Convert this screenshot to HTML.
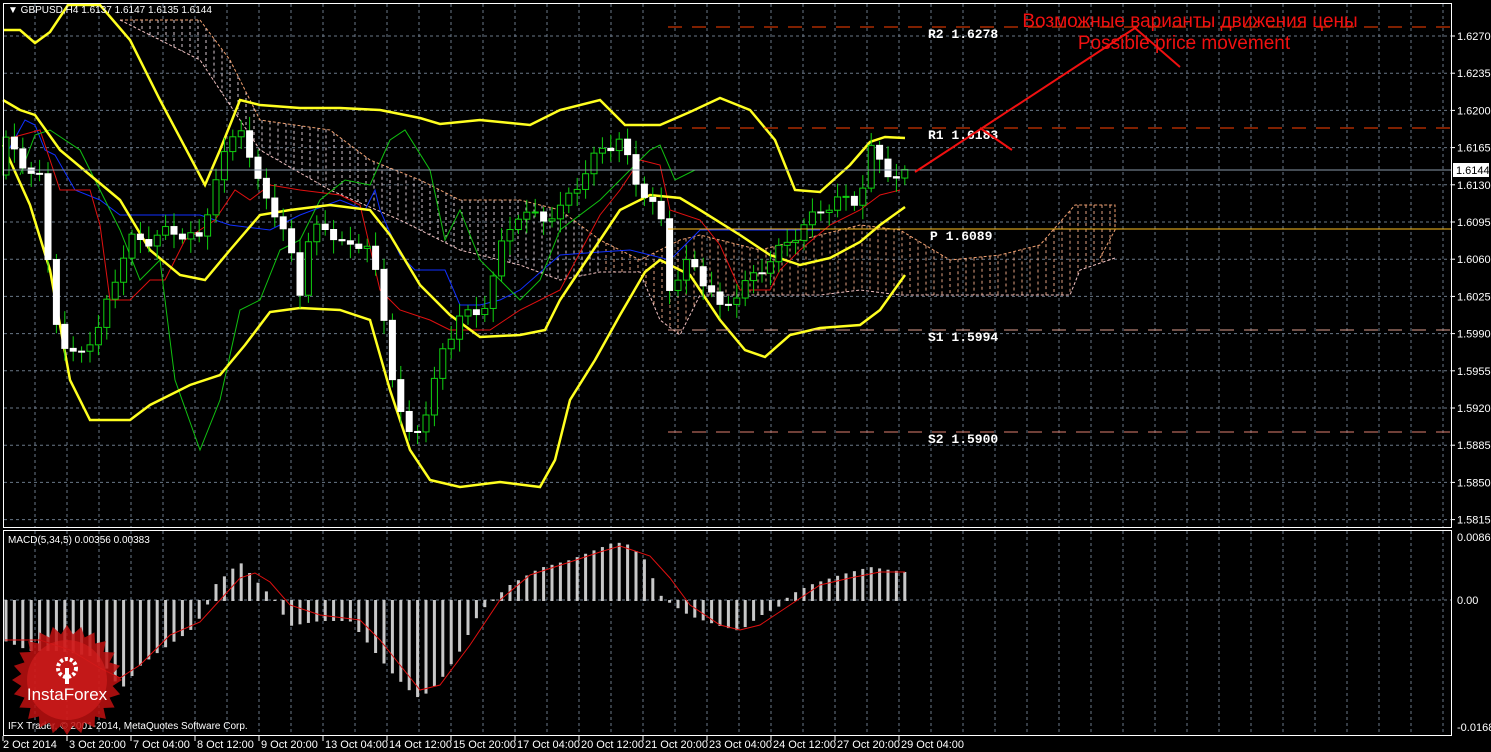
<!DOCTYPE html>
<html><head><meta charset="utf-8"><style>
html,body{margin:0;padding:0;background:#000;width:1491px;height:752px;overflow:hidden}
svg{display:block}
text{font-family:"Liberation Sans",sans-serif}
.ax{fill:#fff;font-size:11px}
.lv{fill:#fff;font-family:"Liberation Mono",monospace;font-size:13px;font-weight:bold}
</style></head><body>
<svg id="s" width="1491" height="752" xmlns="http://www.w3.org/2000/svg">
<rect width="1491" height="752" fill="#000"/>
<g id="grid"></g>
<g id="cloud"></g>
<g id="lines"></g>
<g id="cand"></g>
<g id="macd"></g>
<line x1="668" y1="27" x2="1451" y2="27" stroke="#ff4000" stroke-width="1" stroke-dasharray="14,10"/>
<line x1="668" y1="128" x2="1451" y2="128" stroke="#ff4000" stroke-width="1" stroke-dasharray="14,10"/>
<line x1="668" y1="229" x2="1451" y2="229" stroke="#ffc020" stroke-width="1"/>
<line x1="668" y1="330" x2="1451" y2="330" stroke="#e0a090" stroke-width="1" stroke-dasharray="14,10"/>
<line x1="668" y1="432" x2="1451" y2="432" stroke="#e08070" stroke-width="1" stroke-dasharray="14,10"/>
<line x1="3" y1="170" x2="1451" y2="170" stroke="#8898a8" stroke-width="1"/>
<text class="lv" x="928" y="38">R2 1.6278</text>
<text class="lv" x="928" y="139">R1 1.6183</text>
<text class="lv" x="930" y="240">P 1.6089</text>
<text class="lv" x="928" y="341">S1 1.5994</text>
<text class="lv" x="928" y="443">S2 1.5900</text>
<polyline points="915,172 1135,28 1180,67" fill="none" stroke="#f01010" stroke-width="2"/>
<line x1="980" y1="128" x2="1012" y2="150" stroke="#f01010" stroke-width="2"/>
<text x="1190" y="27" fill="#f01010" font-size="19" text-anchor="middle">Возможные варианты движения цены</text>
<text x="1184" y="49" fill="#f01010" font-size="19" text-anchor="middle">Possible price movement</text>
<rect x="3.5" y="3.5" width="1448" height="524" fill="none" stroke="#fff"/>
<rect x="3.5" y="530.5" width="1448" height="205" fill="none" stroke="#fff"/>
<g id="axis"></g>
<text x="8" y="13" fill="#fff" font-size="10">▼ GBPUSD,H4  1.6137 1.6147 1.6135 1.6144</text>
<text x="8" y="543" fill="#fff" font-size="10">MACD(5,34,5) 0.00356 0.00383</text>
<text x="8" y="729" fill="#fff" font-size="10">IFX Trader, © 2001-2014, MetaQuotes Software Corp.</text>
<rect x="1453" y="163" width="36" height="14" fill="#fff"/>
<text x="1456" y="174" fill="#000" font-size="11">1.6144</text>
<g transform="translate(67,680)">
<polygon id="star" fill="#c01010" opacity="0.85"/>
<circle r="40" fill="#d82020" opacity="0.6"/>
<circle cx="0" cy="-12" r="9" fill="none" stroke="#fff" stroke-width="4" stroke-dasharray="3,2"/>
<rect x="-2" y="-12" width="4" height="16" fill="#fff"/>
<text x="0" y="20" fill="#fff" font-size="17" text-anchor="middle">InstaForex</text>
</g>
</svg>
<script>
const NS="http://www.w3.org/2000/svg";
function el(p,t,a){const e=document.createElementNS(NS,t);for(const k in a)e.setAttribute(k,a[k]);document.getElementById(p).appendChild(e);return e;}
function interp(pts,x){for(let i=0;i<pts.length-1;i++){if(x>=pts[i][0]&&x<=pts[i+1][0]){const t=(x-pts[i][0])/(pts[i+1][0]-pts[i][0]);return pts[i][1]+t*(pts[i+1][1]-pts[i][1]);}}return pts[pts.length-1][1];}
function pl(p,pts,c,w,d){const e=el(p,'polyline',{points:pts.map(a=>a.join(',')).join(' '),fill:'none',stroke:c,'stroke-width':w});if(d)e.setAttribute('stroke-dasharray',d);}
for(let x=35;x<1451;x+=32)el('grid','line',{x1:x,y1:4,x2:x,y2:527,stroke:'#6a7888','stroke-dasharray':'3,3'});
for(let x=35;x<1451;x+=32)el('grid','line',{x1:x,y1:531,x2:x,y2:735,stroke:'#6a7888','stroke-dasharray':'3,3'});
const prices=["1.6270","1.6235","1.6200","1.6165","1.6130","1.6095","1.6060","1.6025","1.5990","1.5955","1.5920","1.5885","1.5850","1.5815"];
prices.forEach((p,i)=>{const y=36+i*37.2;el('grid','line',{x1:4,y1:y,x2:1451,y2:y,stroke:'#6a7888','stroke-dasharray':'3,3'});el('axis','line',{x1:1451,y1:y,x2:1455,y2:y,stroke:'#fff'});const t=el('axis','text',{x:1457,y:y+4,class:'ax'});t.textContent=p;});
el('grid','line',{x1:4,y1:600,x2:1451,y2:600,stroke:'#6a7888','stroke-dasharray':'3,3'});
[["0.00869",537],["0.00",600],["-0.01682",727]].forEach(a=>{const t=el('axis','text',{x:1457,y:a[1]+4,class:'ax'});t.textContent=a[0];});
const dates=["2 Oct 2014","3 Oct 20:00","7 Oct 04:00","8 Oct 12:00","9 Oct 20:00","13 Oct 04:00","14 Oct 12:00","15 Oct 20:00","17 Oct 04:00","20 Oct 12:00","21 Oct 20:00","23 Oct 04:00","24 Oct 12:00","27 Oct 20:00","29 Oct 04:00"];
dates.forEach((d,i)=>{const x=3+i*64;el('axis','line',{x1:x,y1:736,x2:x,y2:741,stroke:'#fff'});const t=el('axis','text',{x:i?x+2:3,y:748,class:'ax'});t.setAttribute('font-size','10.5');t.textContent=d;});
const ctop=[[120,20],[200,20],[230,60],[260,120],[330,130],[370,160],[420,180],[460,200],[520,200],[560,210],[600,240],[640,260],[660,250],[680,240],[700,235],[720,240],[760,250],[800,240],[860,225],[900,230],[950,260],[1000,255],[1040,245],[1075,205],[1115,205],[1115,230],[1100,258]];
const cbot=[[120,20],[200,60],[260,150],[330,190],[400,220],[460,250],[520,265],[560,280],[600,272],[640,272],[660,320],[680,335],[700,295],[760,295],[820,295],[860,290],[900,295],[1000,295],[1070,295],[1080,270],[1115,258]];
for(let x=126;x<1115;x+=8){const a=interp(ctop,x),b=interp(cbot,x);if(b-a>4)el('cloud','line',{x1:x,y1:a,x2:x,y2:b,stroke:x<600?'#d8c8d0':'#e0a080','stroke-dasharray':'3,3','stroke-width':1});}
pl('cloud',ctop,'#f0a070',1,'3,2');pl('cloud',cbot,'#f0c0c0',1,'3,2');
pl('lines',[[3,160],[25,120],[35,125],[45,150],[55,155],[75,190],[100,200],[120,215],[160,215],[200,215],[230,225],[270,230],[300,215],[340,200],[365,210],[375,190],[380,210],[400,255],[415,270],[445,270],[460,305],[480,305],[500,300],[520,290],[560,255],[600,252],[630,250],[670,260],[680,250],[700,230],[780,230],[820,230]],'#1030ff',1);
pl('lines',[[3,140],[40,130],[60,190],[90,190],[100,225],[110,300],[130,300],[150,280],[165,280],[185,240],[215,220],[235,190],[250,200],[270,185],[300,190],[340,195],[360,205],[380,290],[400,310],[430,320],[450,330],[470,330],[490,330],[520,310],[560,290],[600,215],[620,190],[640,160],[660,165],[670,210],[700,220],[720,245],[740,290],[770,290],[780,270],[800,250],[830,225],[860,210],[880,195],[900,190]],'#e01010',1);
pl('lines',[[20,175],[35,135],[50,130],[80,150],[100,190],[120,230],[140,280],[160,260],[175,380],[200,450],[220,400],[240,310],[260,300],[280,250],[300,240],[320,200],[345,180],[370,185],[390,140],[405,130],[430,170],[445,240],[460,210],[480,260],[500,280],[520,300],[540,280],[560,230],[600,200],[630,170],[650,150],[660,145],[675,180],[695,170]],'#10c010',1);
pl('lines',[[3,30],[20,30],[35,43],[50,32],[68,5],[100,5],[130,40],[160,100],[205,185],[220,150],[240,100],[260,105],[300,108],[340,108],[380,110],[420,118],[440,124],[480,120],[530,125],[560,110],[600,100],[625,125],[660,125],[690,112],[720,98],[750,110],[775,140],[795,190],[820,192],[850,165],[870,142],[885,137],[905,138]],'#ffff20',2.5);
pl('lines',[[3,100],[20,110],[35,115],[60,150],[90,175],[120,200],[150,250],[180,275],[205,280],[230,250],[260,215],[290,210],[330,205],[370,210],[390,235],[420,285],[450,315],[480,337],[520,335],[545,330],[560,300],[590,255],[620,210],[650,195],[680,198],[700,210],[740,235],[770,255],[800,265],[830,258],[860,242],[880,225],[905,207]],'#ffff20',2.5);
pl('lines',[[3,145],[30,205],[50,270],[70,380],[90,420],[130,420],[150,405],[190,385],[220,375],[245,345],[270,312],[300,308],[340,310],[370,320],[390,390],[410,450],[430,480],[460,487],[500,482],[540,487],[555,460],[570,400],[595,360],[620,315],[645,272],[660,260],[690,275],[720,320],[745,350],[765,357],[790,335],[820,328],[860,325],[880,310],[905,275]],'#ffff20',2.5);
const cp=[[5,140],[20,160],[40,180],[50,280],[60,340],[70,360],[90,340],[100,330],[110,290],[130,240],[150,240],[170,230],[200,240],[215,180],[240,120],[255,180],[270,200],[290,250],[300,290],[310,230],[330,230],[350,250],[370,240],[380,300],[395,390],[410,440],[420,430],[440,360],[450,340],[460,310],[480,320],[500,250],[520,210],[540,220],[560,210],[580,180],[600,150],[620,140],[635,180],[650,200],[665,230],[670,290],[690,260],[710,290],[720,310],[740,290],[760,270],[780,250],[800,230],[820,210],[840,200],[860,200],[870,150],[880,160],[895,180],[905,175]];
let prev=interp(cp,2);
for(let x=6;x<=906;x+=8.4){const c=interp(cp,x)+Math.sin(x*1.7)*6;const o=prev;const top=Math.min(o,c),bot=Math.max(o,c);const wt=top-4-Math.abs(Math.sin(x))*10,wb=bot+4+Math.abs(Math.cos(x*1.3))*10;
el('cand','line',{x1:x,y1:wt,x2:x,y2:wb,stroke:'#10d010'});
el('cand','rect',{x:x-3,y:top,width:6,height:Math.max(1,bot-top),fill:c>o?'#fff':'#000',stroke:c>o?'#fff':'#10d010'});prev=c;}
const mh=[[5,640],[30,650],[60,650],[90,655],[110,670],[120,690],[140,665],[160,650],[190,630],[205,610],[215,585],[240,562],[260,585],[275,600],[290,625],[320,620],[350,620],[370,645],[390,670],[410,690],[420,698],[440,680],[460,650],[480,610],[495,598],[510,585],[540,568],[570,560],[600,548],[615,542],[630,545],[645,560],[660,595],[670,602],[690,615],[720,625],[740,630],[760,615],[780,605],[790,595],[810,585],[840,575],[870,567],[890,570],[905,572]];
for(let x=6;x<=906;x+=8.4){const y=interp(mh,x);el('macd','rect',{x:x-1.5,y:Math.min(y,600),width:3,height:Math.abs(y-600)+1,fill:'#c8c8c8'});}
pl('macd',[[5,640],[40,640],[70,650],[100,668],[120,678],[140,665],[170,635],[200,622],[220,600],[240,578],[255,573],[270,582],[290,605],[320,615],[360,620],[380,640],[400,665],[420,690],[440,685],[470,645],[500,600],[530,575],[570,562],[600,552],[620,546],[650,556],[670,578],[690,605],[720,625],[740,630],[760,625],[790,605],[820,585],[850,578],[880,572],[905,572]],'#e01010',1);
let s=[];for(let i=0;i<48;i++){const r=i%2?46:55,a=i*Math.PI/24;s.push((r*Math.cos(a)).toFixed(1)+','+(r*Math.sin(a)).toFixed(1));}
document.getElementById('star').setAttribute('points',s.join(' '));
</script>
</body></html>
